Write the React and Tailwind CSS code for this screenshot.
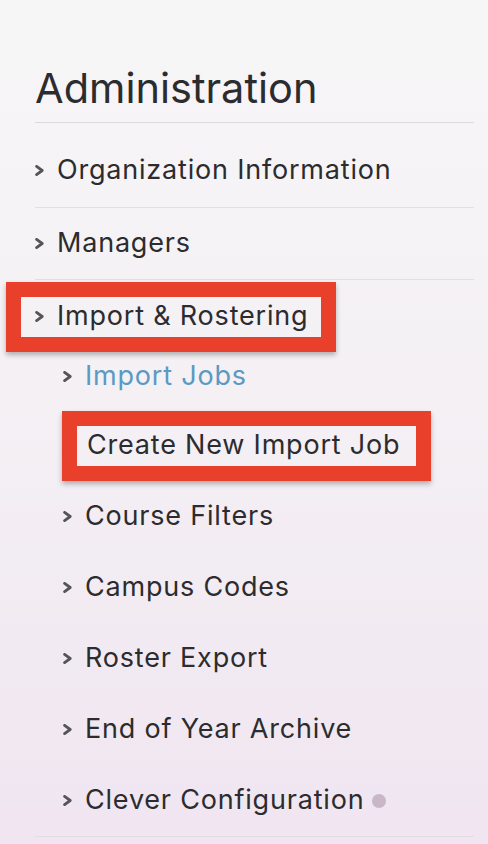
import React from 'react';

function Chevron() {
  return (
    <svg width="9" height="11" viewBox="0 0 9 11" className="mr-[13px] shrink-0" fill="none">
      <path d="M1.6 1.4 L7.2 5.5 L1.6 9.6" stroke="#555558" strokeWidth="2.8" strokeLinecap="round" strokeLinejoin="round" />
    </svg>
  );
}

function Highlight({ className }) {
  return (
    <span
      className={`pointer-events-none absolute border-[15px] border-[#e8402a] shadow-[0_3px_5px_rgba(0,0,0,0.28)] ${className}`}
    />
  );
}

const subItems = ['Course Filters', 'Campus Codes', 'Roster Export', 'End of Year Archive'];

export default function App() {
  return (
    <div
      className="min-h-[844px] w-full bg-gradient-to-b from-[#f7f6f7] via-[#f4f0f4] to-[#f0e5f1] pl-[35px] pr-[14px] pt-[63px] text-[#2c2c2f]"
      style={{ fontFamily: 'Inter, "Noto Sans", sans-serif' }}
    >
      <h1 className="h-[59px] text-[41.5px] leading-[50px] font-normal">Administration</h1>

      <ul className="border-t border-[#dcdadd] text-[27px] tracking-[0.8px]">
        <li className="flex h-[85px] items-center border-b border-[#e2dfe3] pt-[10px]">
          <Chevron />
          <span>Organization Information</span>
        </li>
        <li className="flex h-[72px] items-center border-b border-[#e2dfe3]">
          <Chevron />
          <span>Managers</span>
        </li>
        <li className="border-b border-[#e2dfe3]">
          <div className="flex h-[59px] items-center pt-[14px]">
            <span className="relative flex items-center">
              <Highlight className="-left-[29px] -right-[28px] top-1/2 h-[70px] -translate-y-1/2" />
              <Chevron />
              <span>Import &amp; Rostering</span>
            </span>
          </div>

          <ul className="pl-[28px]">
            <li className="flex h-[71px] items-center pt-[3px]">
              <Chevron />
              <span className="text-[#5a9ac3]">Import Jobs</span>
            </li>
            <li className="flex h-[71px] items-center pl-[24px]">
              <span className="relative">
                <Highlight className="-left-[25px] -right-[31px] top-1/2 h-[70px] -translate-y-1/2" />
                Create New Import Job
              </span>
            </li>
            {subItems.map((label) => (
              <li key={label} className="flex h-[71px] items-center">
                <Chevron />
                <span>{label}</span>
              </li>
            ))}
            <li className="flex h-[71px] items-center">
              <Chevron />
              <span>Clever Configuration</span>
              <span className="ml-[8px] h-[14px] w-[14px] rounded-full bg-[#c9b7c8]" />
            </li>
          </ul>
        </li>
      </ul>
    </div>
  );
}
